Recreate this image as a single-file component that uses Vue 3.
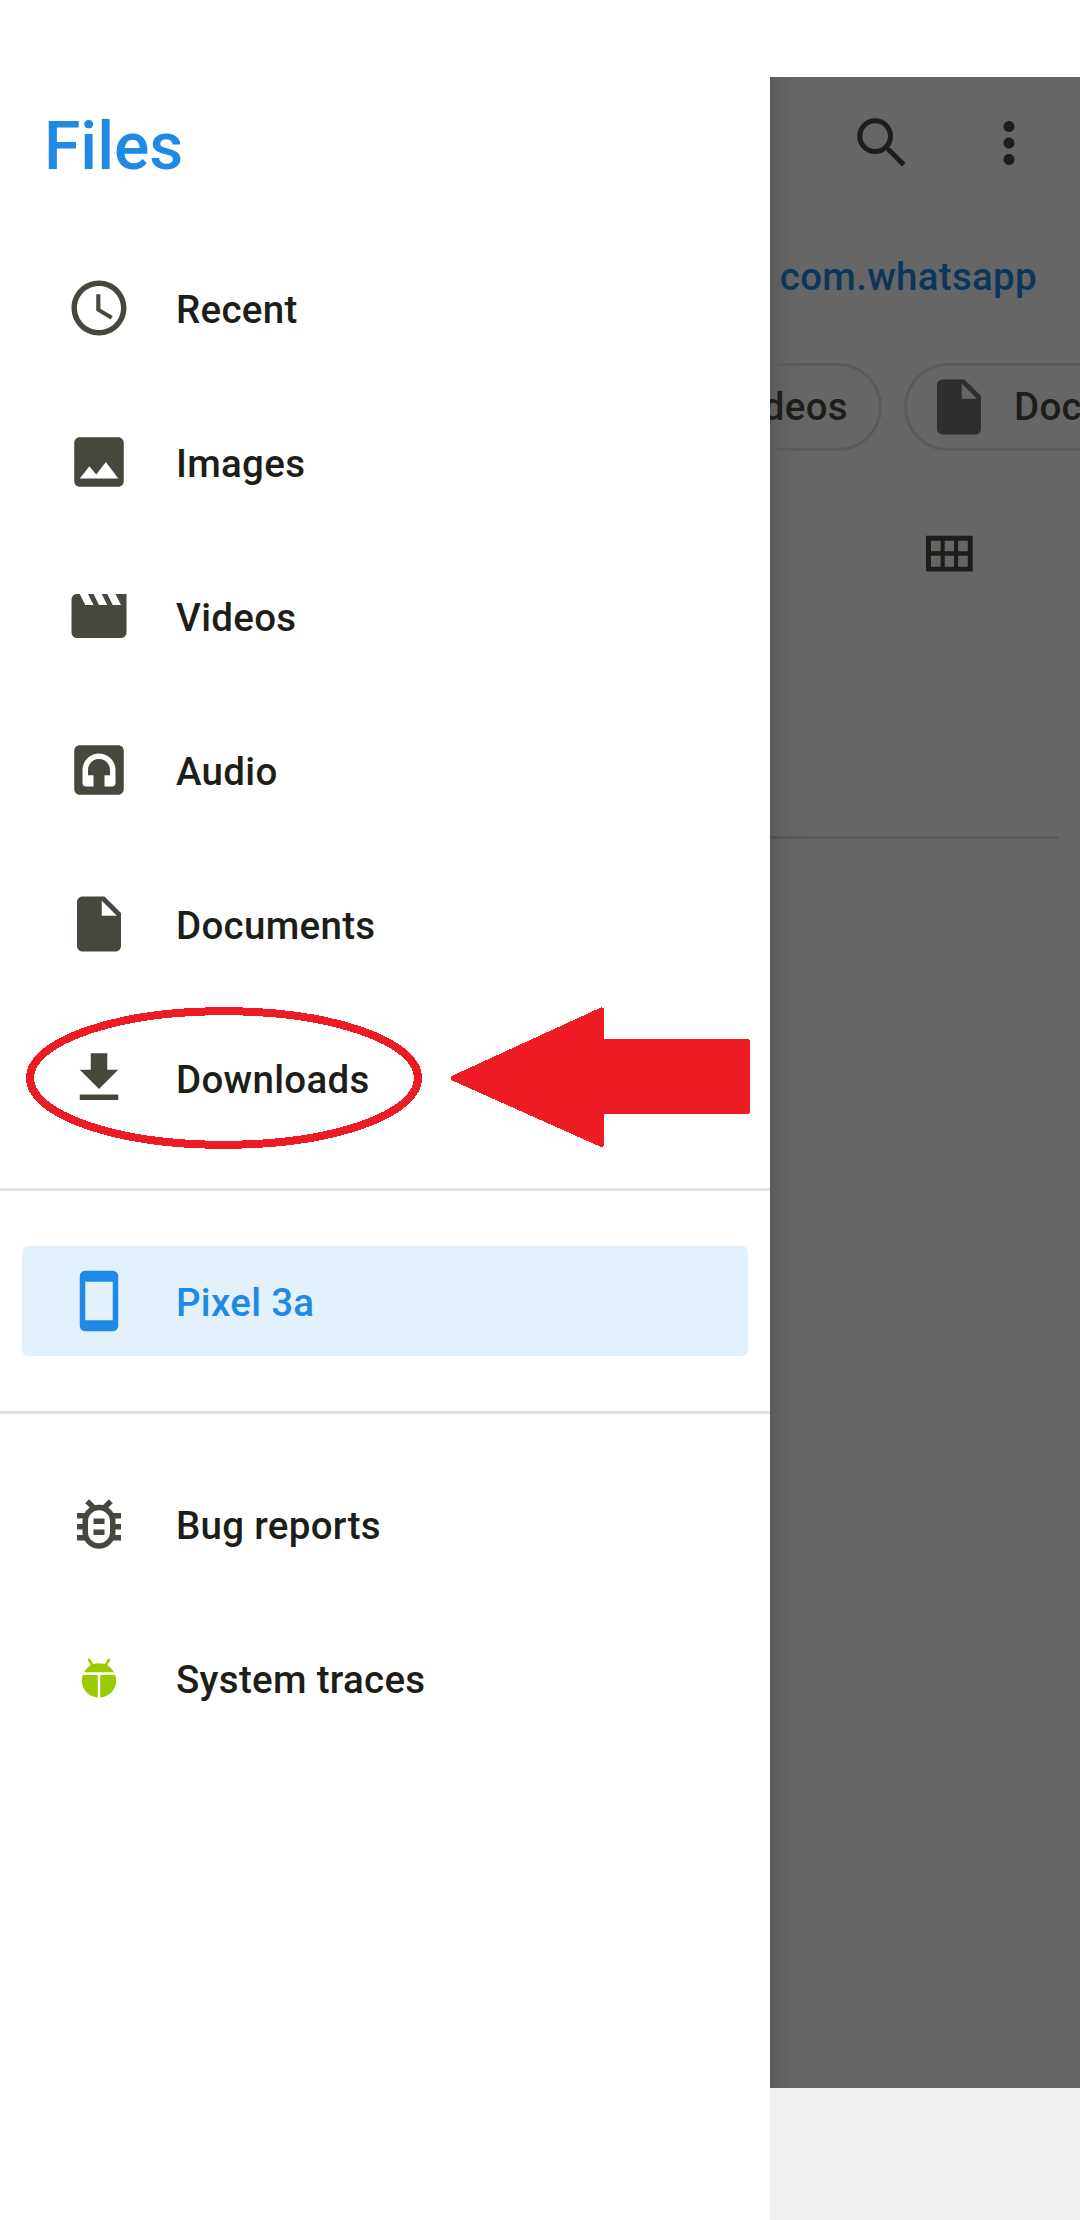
<script setup>
const icons = {
  recent: { d: 'M11.99 2C6.47 2 2 6.48 2 12s4.47 10 9.99 10C17.52 22 22 17.52 22 12S17.52 2 11.99 2zM12 20c-4.42 0-8-3.58-8-8s3.58-8 8-8 8 3.58 8 8-3.58 8-8 8zM12.5 7H11v6l5.25 3.15.75-1.23-4.5-2.67z' },
  images: { d: 'M21 19V5c0-1.1-.9-2-2-2H5c-1.1 0-2 .9-2 2v14c0 1.1.9 2 2 2h14c1.1 0 2-.9 2-2zM8.5 13.5l2.5 3.01L14.5 12l4.5 6H5l3.5-4.5z' },
  videos: { d: 'M18 4l2 4h-3l-2-4h-2l2 4h-3l-2-4H8l2 4H7L5 4H4c-1.1 0-1.99.9-1.99 2L2 18c0 1.1.9 2 2 2h16c1.1 0 2-.9 2-2V4h-4z' },
  audio: { d: 'M5 3h14c1.1 0 2 .9 2 2v14c0 1.1-.9 2-2 2H5c-1.1 0-2-.9-2-2V5c0-1.1.9-2 2-2zM12 6c-3.3 0-6 2.7-6 6v4.8c0 .7.5 1.2 1.2 1.2H10v-4.1H8V12c0-2.2 1.8-4 4-4s4 1.8 4 4v1.9h-2V18h2.8c.7 0 1.2-.5 1.2-1.2V12c0-3.3-2.7-6-6-6z' },
  documents: { d: 'M6 2c-1.1 0-1.99.9-1.99 2L4 20c0 1.1.89 2 1.99 2H18c1.1 0 2-.9 2-2V8l-6-6H6zm7 7V3.5L18.5 9H13z' },
  downloads: { d: 'M19 9h-4V3H9v6H5l7 7 7-7zM5 18v2h14v-2H5z' },
  phone: { d: 'M17 1.01L7 1c-1.1 0-2 .9-2 2v18c0 1.1.9 2 2 2h10c1.1 0 2-.9 2-2V3c0-1.1-.9-1.99-2-1.99zM17 19H7V5h10v14z' },
  bug: { d: 'M20 8h-2.81c-.45-.78-1.07-1.45-1.82-1.96L17 4.41 15.59 3l-2.17 2.17C12.96 5.06 12.49 5 12 5s-.96.06-1.41.17L8.41 3 7 4.41l1.62 1.63C7.88 6.55 7.26 7.22 6.81 8H4v2h2.09c-.05.33-.09.66-.09 1v1H4v2h2v1c0 .34.04.67.09 1H4v2h2.81c1.04 1.79 2.97 3 5.19 3s4.15-1.21 5.19-3H20v-2h-2.09c.05-.33.09-.66.09-1v-1h2v-2h-2v-1c0-.34-.04-.67-.09-1H20V8zM12 7c2.2 0 4 1.8 4 4v4c0 2.2-1.8 4-4 4s-4-1.8-4-4v-4c0-2.2 1.8-4 4-4zM10 14h4v2h-4zM10 10h4v2h-4z' },
  traces: {
    d: 'M6.51 9.94A6.24 6.24 0 0 1 17.49 9.94zM6.09 10.9H11.55V19.14A6.24 6.24 0 0 1 6.09 10.9zM12.45 10.9H17.91A6.24 6.24 0 0 1 12.45 19.14z',
    stroke: 'M8.4 5.4L9.7 7.5M15.6 5.4L14.3 7.5'
  }
}

const groups = [
  [
    { label: 'Recent', icon: 'recent' },
    { label: 'Images', icon: 'images' },
    { label: 'Videos', icon: 'videos' },
    { label: 'Audio', icon: 'audio' },
    { label: 'Documents', icon: 'documents' },
    { label: 'Downloads', icon: 'downloads', marked: true }
  ],
  [{ label: 'Pixel 3a', icon: 'phone', selected: true }],
  [
    { label: 'Bug reports', icon: 'bug' },
    { label: 'System traces', icon: 'traces' }
  ]
]
</script>

<template>
  <div class="screen">
    <main class="page">
      <header class="toolbar">
        <svg class="icon" viewBox="0 0 24 24">
          <circle cx="9.5" cy="9.5" r="5.58" fill="none" stroke="currentColor" stroke-width="1.85" />
          <path d="M13.4 13.4L14.6 14.6" stroke="currentColor" stroke-width="1.2" />
          <path d="M14.3 14.3L19.9 19.9" stroke="currentColor" stroke-width="1.8" />
        </svg>
        <svg class="icon" viewBox="0 0 24 24">
          <path d="M12 8c1.1 0 2-.9 2-2s-.9-2-2-2-2 .9-2 2 .9 2 2 2zm0 2c-1.1 0-2 .9-2 2s.9 2 2 2 2-.9 2-2-.9-2-2-2zm0 6c-1.1 0-2 .9-2 2s.9 2 2 2 2-.9 2-2-.9-2-2-2z" />
        </svg>
      </header>
      <div class="breadcrumb"><span>com.whatsapp</span></div>
      <div class="chips">
        <div class="chip chip-videos">
          <svg class="icon" viewBox="0 0 24 24"><path :d="icons.videos.d" /></svg>
          <span>Videos</span>
        </div>
        <div class="chip">
          <svg class="icon" viewBox="0 0 24 24"><path :d="icons.documents.d" /></svg>
          <span>Documents</span>
        </div>
      </div>
      <div class="view-bar">
        <svg class="icon" viewBox="0 0 24 24">
          <path fill-rule="evenodd" d="M4 5h17v13H4zM5.8 6.8v3.8h3.5V6.8zM10.8 6.8v3.8h3.4V6.8zM15.7 6.8v3.8h3.5V6.8zM5.8 12.3v4h3.5v-4zM10.8 12.3v4h3.4v-4zM15.7 12.3v4h3.5v-4z" />
        </svg>
      </div>
      <div class="rule"></div>
    </main>
    <div class="nav-bar"></div>

    <aside class="drawer">
      <h1>Files</h1>
      <ul v-for="(group, g) in groups" :key="g" class="group">
        <li v-for="item in group" :key="item.label" class="row" :class="{ selected: item.selected }">
          <svg class="icon" :class="item.icon" viewBox="0 0 24 24">
            <path fill-rule="evenodd" :d="icons[item.icon].d" />
            <path v-if="icons[item.icon].stroke" class="line" :d="icons[item.icon].stroke" />
          </svg>
          <span>{{ item.label }}</span>
          <svg v-if="item.marked" class="marker" viewBox="0 0 728 142">
            <ellipse cx="198" cy="71" rx="194" ry="66.8" />
            <path d="M425 69.3L575 .5Q578 0 578 2V32H721Q724 32 724 34V105Q724 107 721 107H578V138Q578 140 575 140L425 73z" />
          </svg>
        </li>
      </ul>
    </aside>
  </div>
</template>

<style>
body {
  margin: 0;
  background: #fff;
}
</style>

<style scoped>
.screen {
  position: relative;
  display: flex;
  flex-direction: column;
  box-sizing: border-box;
  width: 1080px;
  height: 2220px;
  padding-top: 77px;
  overflow: hidden;
  background: #fff;
  font-family: Roboto, "Liberation Sans", sans-serif;
  font-size: 38.5px;
  font-weight: 500;
  line-height: 46px;
  letter-spacing: 0.3px;
  color: #1d1e1a;
}

.icon {
  display: block;
  flex: none;
  width: 66px;
  height: 66px;
  fill: currentColor;
}

/* Page behind the drawer, already dimmed */
.page {
  height: 2011px;
  overflow: hidden;
  background: linear-gradient(to right, #5a5a5a 770px, #5e5e5e 776px, #626262 785px, #656565 796px, #666 806px);
}

.toolbar {
  display: flex;
  justify-content: flex-end;
  align-items: center;
  gap: 61px;
  height: 132px;
  padding-right: 38px;
}

.breadcrumb {
  display: flex;
  justify-content: flex-end;
  align-items: center;
  height: 136px;
  padding-right: 43px;
  color: #0c365c;
}

.chips {
  display: flex;
  gap: 22px;
  width: 1300px;
  padding: 18px 0 0 596px;
}

.chip {
  display: flex;
  align-items: center;
  gap: 22px;
  box-sizing: border-box;
  height: 88px;
  padding: 0 31px 0 19px;
  border: 3px solid #5a5a5a;
  border-radius: 44px;
}

.chip .icon {
  color: #2f2f2f;
}

.chip-videos {
  justify-content: flex-end;
  width: 286px;
}

.view-bar {
  display: flex;
  justify-content: flex-end;
  padding: 71px 99px 0 0;
}

.rule {
  height: 3px;
  margin: 248px 22px 0;
  background: #000;
  opacity: 0.12;
}

.nav-bar {
  flex: 1;
  border-top: 1px solid #f3eff2;
  background: #efefef;
}

.drawer {
  position: absolute;
  inset: 0 auto 0 0;
  width: 770px;
  background: #fff;
}

h1 {
  margin: 0;
  padding: 107px 0 0 44px;
  height: 124px;
  font-size: 66px;
  font-weight: 500;
  line-height: 80px;
  letter-spacing: 0;
  color: #1f89e6;
}

.group {
  display: flex;
  flex-direction: column;
  gap: 44px;
  margin: 0;
  padding: 22px 22px 55px;
  list-style: none;
}

.group + .group {
  padding-top: 55px;
  border-top: 3px solid #e2e2e2;
}

.row {
  position: relative;
  display: flex;
  align-items: center;
  gap: 44px;
  height: 110px;
  padding-left: 44px;
  border-radius: 6px;
}

.row span {
  padding-top: 4px;
}

.row .icon {
  color: #46483e;
}

.row.selected {
  background: #e3f1fc;
  color: #1f89e6;
}

.row.selected .icon {
  color: #1f89e6;
}

.row .icon.traces {
  color: #99cc00;
}

.line {
  fill: none;
  stroke: currentColor;
  stroke-width: 1;
  stroke-linecap: round;
}

/* Hand-drawn highlight over the row */
.marker {
  position: absolute;
  left: 4px;
  top: -16px;
  width: 728px;
  height: 142px;
  fill: #ed1c24;
  shape-rendering: crispEdges;
}

.marker ellipse {
  fill: none;
  stroke: #ed1c24;
  stroke-width: 8;
}
</style>
